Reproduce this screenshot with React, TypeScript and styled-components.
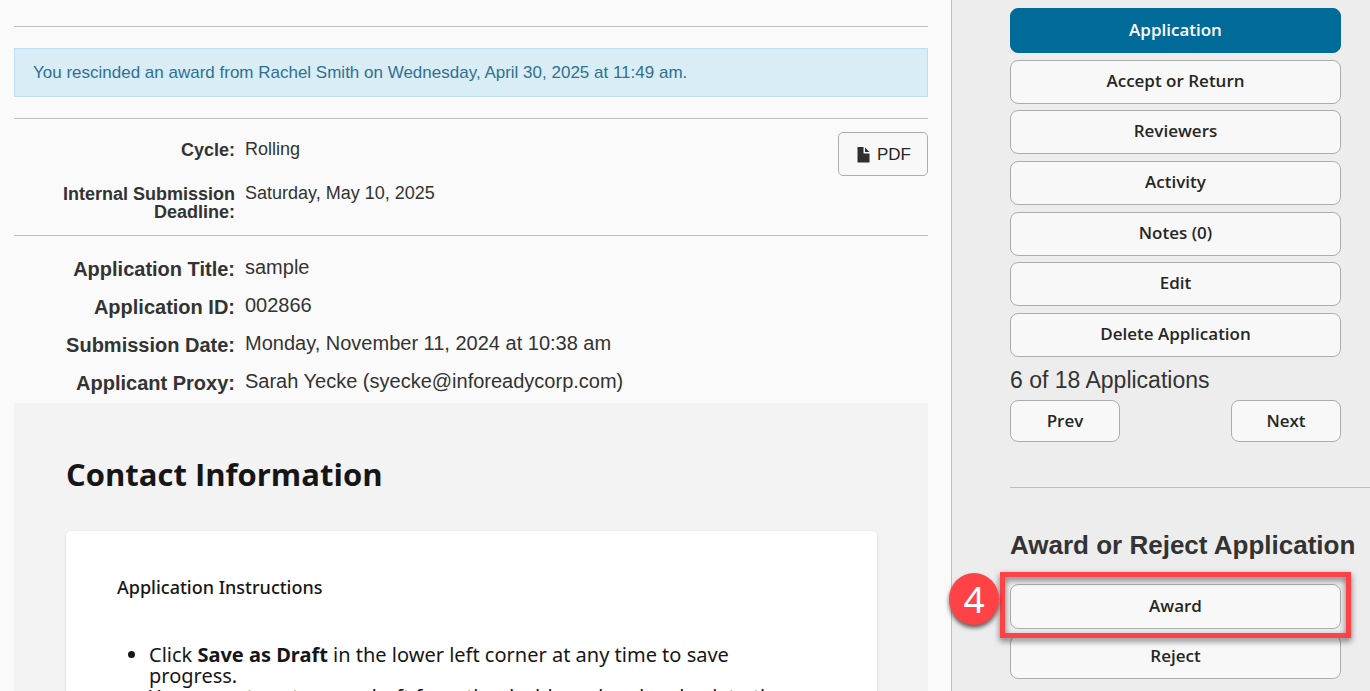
import React from "react";
import styled, { createGlobalStyle } from "styled-components";

const Global = createGlobalStyle`
  *, *::before, *::after { box-sizing: border-box; }
  html, body, #root { height: 100%; }
  body {
    margin: 0;
    background: #fafafa;
    color: #333;
    font-family: "Liberation Sans", Arial, sans-serif;
    font-size: 18px;
    overflow: hidden;
  }
`;

const Page = styled.div`
  display: flex;
  height: 100vh;
  overflow: hidden;
`;

const Main = styled.main`
  flex: 1;
  min-width: 0;
  padding: 26px 23px 0 14px;
`;

const Divider = styled.hr<{ $gap?: number }>`
  height: 1px;
  border: 0;
  margin: 0 0 ${(p) => p.$gap ?? 0}px;
  background: #bebebe;
`;

const Alert = styled.div`
  padding: 13px 18px;
  margin-bottom: 21px;
  border: 1px solid #bce0f2;
  background: #d9edf7;
  color: #31708f;
  font-size: 17px;
  line-height: 21px;
`;

const Summary = styled.div`
  display: flex;
  justify-content: space-between;
  align-items: flex-start;
  padding: 13px 0 14px;
`;

const Term = styled.dt`
  padding-top: 1px;
  padding-left: 40px;
  font-weight: 700;
  text-align: right;
`;

const Value = styled.dd`
  margin: 0;
`;

const Details = styled.dl<{ $large?: boolean }>`
  display: grid;
  grid-template-columns: 221px 1fr;
  column-gap: 10px;
  row-gap: ${(p) => (p.$large ? 14 : 25)}px;
  margin: 0;
  padding-top: ${(p) => (p.$large ? 20 : 8)}px;
  padding-bottom: ${(p) => (p.$large ? 9 : 0)}px;
  font-size: ${(p) => (p.$large ? 20 : 18)}px;
  line-height: ${(p) => (p.$large ? 22 : 18)}px;

  ${Term} {
    padding-top: ${(p) => (p.$large ? 2 : 1)}px;
  }
`;

const PdfButton = styled.button`
  display: flex;
  align-items: center;
  justify-content: center;
  gap: 7px;
  width: 90px;
  height: 44px;
  padding: 2px 0 0 2px;
  border: 1px solid #adadad;
  border-radius: 5px;
  background: #f8f8f8;
  color: #262626;
  font: 17px "Liberation Sans", Arial, sans-serif;
`;

const FormSection = styled.section`
  padding: 49px 51px 0 52px;
  background: #f3f3f3;
  color: #161616;
  font-family: "Noto Sans", "Open Sans", sans-serif;
`;

const SectionTitle = styled.h2`
  margin: 0 0 35px;
  font-family: "Open Sans", "Noto Sans", sans-serif;
  font-size: 31px;
  font-weight: 700;
  line-height: 44px;
`;

const Card = styled.div`
  min-height: 200px;
  padding: 44px 51px 0;
  border-radius: 5px;
  background: #fff;
  box-shadow: 0 1px 3px rgba(0, 0, 0, 0.14);
`;

const CardTitle = styled.h3`
  margin: 0 0 44px;
  font-size: 18px;
  font-weight: 500;
  line-height: 25px;
`;

const Instructions = styled.ul`
  margin: 0;
  padding: 0 8px 0 32px;
  font-size: 20px;
  line-height: 21px;
`;

const Sidebar = styled.aside`
  flex: 0 0 419px;
  padding: 8px 0 0 58px;
  border-left: 1px solid #bebebe;
  background: #ededed;
`;

const Stack = styled.nav`
  display: flex;
  flex-direction: column;
  gap: 6px;
  width: 331px;
`;

const Action = styled.button<{ $active?: boolean; $small?: boolean }>`
  width: ${(p) => (p.$small ? "110px" : "100%")};
  height: ${(p) => (p.$small ? 42 : p.$active ? 45 : 44)}px;
  padding: 0 0 ${(p) => (p.$small ? 1 : 3)}px;
  border: 1px solid ${(p) => (p.$active ? "#006b99" : "#adadad")};
  border-radius: 8px;
  background: ${(p) => (p.$active ? "#006b99" : "#f8f8f8")};
  color: ${(p) => (p.$active ? "#fff" : "#262626")};
  font: 600 17px "Open Sans", "Noto Sans", sans-serif;
`;

const Views = styled(Stack)`
  justify-content: space-between;
  gap: 0;
  height: 349px;
`;

const Count = styled.p`
  margin: 9px 0 6px;
  font-size: 23px;
  line-height: 28px;
`;

const Pager = styled.div`
  display: flex;
  justify-content: space-between;
  width: 331px;
  margin-bottom: 45px;
`;

const DecisionTitle = styled.h2`
  margin: 41px 0 23px;
  font-size: 26px;
  line-height: 32px;
  white-space: nowrap;
`;

const Highlight = styled.div`
  position: relative;

  &::after {
    content: "";
    position: absolute;
    inset: -12px -10px -9px;
    border: 5px solid #ff4245;
    filter: drop-shadow(0 3px 3px rgba(0, 0, 0, 0.55));
    pointer-events: none;
    z-index: 1;
  }

  ${Action} {
    display: block;
    height: 45px;
  }
`;

const StepBadge = styled.span`
  position: absolute;
  left: -61px;
  top: -11px;
  z-index: 2;
  display: flex;
  align-items: center;
  justify-content: center;
  width: 50px;
  height: 52px;
  border-radius: 50%;
  background: #ff4245;
  box-shadow: 0 3px 4px rgba(0, 0, 0, 0.6);
  color: #fff;
  font-family: "Noto Sans", "Open Sans", sans-serif;
  font-size: 37px;
  line-height: 52px;
`;

const views = ["Application", "Accept or Return", "Reviewers", "Activity", "Notes (0)", "Edit", "Delete Application"];

const submission = [
  ["Application Title:", "sample"],
  ["Application ID:", "002866"],
  ["Submission Date:", "Monday, November 11, 2024 at 10:38 am"],
  ["Applicant Proxy:", "Sarah Yecke (syecke@inforeadycorp.com)"],
];

const FileIcon = () => (
  <svg width="13" height="16" viewBox="0 0 13 16" fill="#2f2f2f" aria-hidden="true">
    <path d="M0.500 0H6.500V6.500H12.500V15.500H0.500Z" />
    <path d="M8 0.500L12.500 5H8Z" />
  </svg>
);

export default function App() {
  return (
    <>
      <Global />
      <Page>
        <Main>
          <Divider $gap={21} />
          <Alert>You rescinded an award from Rachel Smith on Wednesday, April 30, 2025 at 11:49 am.</Alert>
          <Divider />
          <Summary>
            <Details>
              <Term>Cycle:</Term>
              <Value>Rolling</Value>
              <Term>Internal Submission Deadline:</Term>
              <Value>Saturday, May 10, 2025</Value>
            </Details>
            <PdfButton>
              <FileIcon />
              PDF
            </PdfButton>
          </Summary>
          <Divider />
          <Details $large>
            {submission.map(([term, value]) => (
              <React.Fragment key={term}>
                <Term>{term}</Term>
                <Value>{value}</Value>
              </React.Fragment>
            ))}
          </Details>
          <FormSection>
            <SectionTitle>Contact Information</SectionTitle>
            <Card>
              <CardTitle>Application Instructions</CardTitle>
              <Instructions>
                <li>
                  Click <strong>Save as Draft</strong> in the lower left corner at any time to save progress.
                </li>
                <li>You can return to your draft from the dashboard and go back to the</li>
              </Instructions>
            </Card>
          </FormSection>
        </Main>
        <Sidebar>
          <Views>
            {views.map((view, i) => (
              <Action key={view} $active={i === 0}>
                {view}
              </Action>
            ))}
          </Views>
          <Count>6 of 18 Applications</Count>
          <Pager>
            <Action $small>Prev</Action>
            <Action $small>Next</Action>
          </Pager>
          <Divider />
          <DecisionTitle>Award or Reject Application</DecisionTitle>
          <Stack>
            <Highlight>
              <StepBadge>4</StepBadge>
              <Action>Award</Action>
            </Highlight>
            <Action>Reject</Action>
          </Stack>
        </Sidebar>
      </Page>
    </>
  );
}
